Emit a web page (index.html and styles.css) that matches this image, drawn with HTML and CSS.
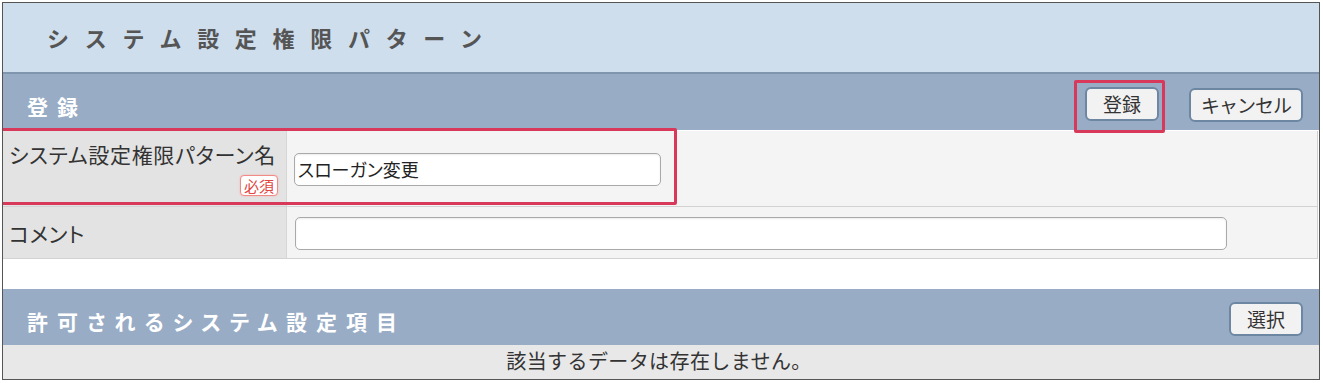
FILE: index.html
```html
<!DOCTYPE html>
<html lang="ja">
<head>
  <meta charset="utf-8">
  <title>システム設定権限パターン</title>
  <link rel="stylesheet" href="styles.css">
</head>
<body>
  <div class="frame">
    <header class="page-title">
      <h1>システム設定権限パターン</h1>
    </header>

    <section class="panel">
      <div class="panel-head">
        <h2>登録</h2>
        <div class="panel-actions">
          <span class="mark mark-button">
            <button type="button" class="btn btn-save">登録</button>
          </span>
          <button type="button" class="btn btn-cancel">キャンセル</button>
        </div>
      </div>

      <div class="form-table">
        <div class="form-row row-name">
          <div class="row-label">
            <label for="pattern-name">システム設定権限パターン名</label>
            <span class="required">必須</span>
          </div>
          <div class="row-value">
            <input type="text" id="pattern-name" class="field field-name" value="スローガン変更">
          </div>
          <span class="mark mark-row"></span>
        </div>
        <div class="form-row row-comment">
          <div class="row-label">
            <label for="comment">コメント</label>
          </div>
          <div class="row-value">
            <input type="text" id="comment" class="field field-comment">
          </div>
        </div>
      </div>
    </section>

    <div class="spacer"></div>

    <section class="panel panel-list">
      <div class="panel-head">
        <h2>許可されるシステム設定項目</h2>
        <button type="button" class="btn btn-select">選択</button>
      </div>
      <div class="empty-row">該当するデータは存在しません。</div>
    </section>
  </div>
</body>
</html>
```

FILE: styles.css
```css
/* Reset default margin and padding */
body, h1, h2, p {
  margin: 0;
  padding: 0;
}

body {
  background-color: #fff;
  font-family: "Noto Sans CJK JP", "Noto Sans", sans-serif;
  color: #333;
}

/* Outer frame */
.frame {
  margin: 2px 3px 0 2px;
  height: 376px;
  border: 1px solid #555;
  display: flex;
  flex-direction: column;
  overflow: hidden;
}

/* Page title */
.page-title {
  height: 69px;
  flex: none;
  background-color: #cfdeed;
  border-bottom: 2px solid #8096ae;
  display: flex;
  align-items: center;
  padding-left: 44px;
}

.page-title h1 {
  font-size: 22px;
  font-weight: 700;
  letter-spacing: 15.7px;
  color: #555;
  margin-top: -2px;
}

/* Section header bars */
.panel-head {
  height: 56px;
  background-color: #98acc5;
  display: flex;
  align-items: center;
  justify-content: space-between;
  padding: 0 16px 0 24px;
}

.panel-head h2 {
  font-size: 21px;
  font-weight: 700;
  color: #fff;
  letter-spacing: 9px;
  font-feature-settings: "palt";
  margin-top: 8px;
}

.panel-actions {
  display: flex;
  align-items: center;
  gap: 30px;
  margin-top: 6px;
}

.btn {
  font-family: "Noto Sans CJK JP", sans-serif;
  font-size: 19px;
  color: #333;
  background-color: #f2f2f2;
  border: 2px solid #6d87a3;
  border-radius: 6px;
  height: 34px;
  padding: 0 15px;
  line-height: 28px;
  cursor: pointer;
}

.btn-save {
  padding: 0 16px;
  margin-top: -2px;
}

.btn-cancel {
  letter-spacing: -1px;
  padding: 0 10px;
}

.btn-select {
  padding: 0 16px;
  margin-top: 3px;
}

/* Red annotation boxes */
.mark {
  position: relative;
  display: inline-flex;
}

.mark-button::after {
  content: "";
  position: absolute;
  z-index: 2;
  left: -11px;
  right: -6px;
  top: -9px;
  bottom: -12px;
  border: 3px solid #d8395b;
  border-radius: 2px;
}

.mark-row {
  position: absolute;
  z-index: 2;
  left: -3px;
  top: -3px;
  width: 677px;
  height: 77px;
  box-sizing: border-box;
  border: 3px solid #d8395b;
  border-radius: 2px;
}

/* Form rows */
.form-table {
  border-right: 1px solid #cfcfcf;
  margin-right: 1px;
}

.form-row {
  position: relative;
  display: grid;
  grid-template-columns: 284px 1fr;
  border-bottom: 1px solid #d2d2d2;
}

.row-label {
  background-color: #e3e3e3;
  border-right: 1px solid #d6d6d6;
  padding: 0 7px 0 6px;
  display: flex;
  flex-direction: column;
  justify-content: center;
}

.row-label label {
  font-size: 21px;
  color: #333;
  font-feature-settings: "palt";
  letter-spacing: 0.7px;
  white-space: nowrap;
}

.row-value {
  background-color: #f4f4f4;
  display: flex;
  align-items: center;
  padding-left: 7px;
}

.row-name {
  height: 75px;
  margin-top: 1px;
}

.row-name .row-label {
  justify-content: flex-start;
  padding-top: 8px;
}

.row-comment {
  height: 51px;
}

.required {
  align-self: flex-end;
  margin-top: 6px;
  margin-right: 1px;
  font-size: 15px;
  line-height: 19px;
  color: #e2453f;
  border: 1.5px solid #f08a86;
  border-radius: 4px;
  background-color: #fff;
  padding: 0 3px;
  box-shadow: 0 0 2px #f6b2b0;
}

.field {
  font-family: "Noto Sans CJK JP", sans-serif;
  font-size: 18px;
  color: #222;
  height: 33px;
  box-sizing: border-box;
  border: 1px solid #a9a9a9;
  border-radius: 5px;
  background-color: #fff;
  padding: 0 3px;
  box-shadow: inset 0 1px 2px rgba(0, 0, 0, 0.08);
  font-feature-settings: "palt";
}

.field-name {
  width: 367px;
  margin-top: 1px;
}

.field-comment {
  width: 932px;
  margin-left: 1px;
  margin-top: 1px;
}

.spacer {
  height: 30px;
  flex: none;
  background-color: #fff;
}

/* Allowed items list */
.panel-list {
  flex: 1;
  display: flex;
  flex-direction: column;
}

.empty-row {
  flex: 1;
  background-color: #e8e8e8;
  text-align: center;
  font-size: 20px;
  line-height: 32px;
  letter-spacing: 0.4px;
  color: #333;
  padding-right: 4px;
}
```
